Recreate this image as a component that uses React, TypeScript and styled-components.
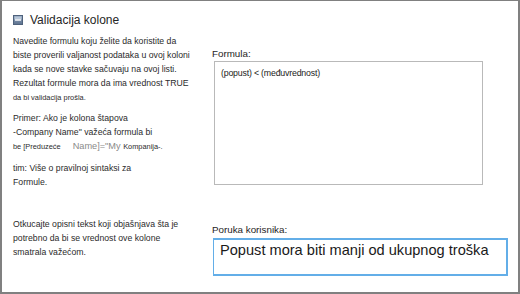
import React from "react";
import styled, { createGlobalStyle } from "styled-components";

const GlobalStyle = createGlobalStyle`
  html, body {
    margin: 0;
    padding: 0;
    background: #ffffff;
  }
  body {
    font-family: "Liberation Sans", Arial, sans-serif;
    color: #1e1e1e;
  }
`;

const Frame = styled.div`
  box-sizing: border-box;
  width: 520px;
  height: 294px;
  border: 2px solid #808080;
  border-top-width: 1px;
  padding: 11px 0 0 11px;
  display: flex;
  flex-direction: column;
`;

const Header = styled.div`
  display: flex;
  align-items: center;
  gap: 7px;
  height: 16px;
`;

const Title = styled.span`
  font-size: 12px;
  color: #262626;
`;

const Section = styled.div<{ $top: number }>`
  display: grid;
  grid-template-columns: 199px 1fr;
  margin-top: ${(p) => p.$top}px;
`;

const Help = styled.div`
  font-size: 8.7px;
  line-height: 14px;
  color: #2b2b2b;
`;

const Para = styled.p<{ $gap?: number }>`
  margin: 0 0 ${(p) => p.$gap ?? 0}px 0;
`;

const Tiny = styled.span`
  font-size: 7.4px;
`;

const Ghost = styled.span`
  color: #8a8a8a;
  font-size: 9.2px;
  padding-left: 12px;
`;

const Field = styled.div<{ $top: number }>`
  display: flex;
  flex-direction: column;
  padding-top: ${(p) => p.$top}px;
`;

const Label = styled.label`
  font-size: 9.8px;
  line-height: 13px;
  color: #1e1e1e;
`;

const FormulaBox = styled.div`
  box-sizing: border-box;
  margin: 1px 0 0 2px;
  width: 269px;
  height: 124px;
  border: 1px solid #b9b9b9;
  padding: 6px 6px;
  font-size: 8.8px;
  letter-spacing: -0.2px;
  color: #222;
`;

const MessageBox = styled.div`
  box-sizing: border-box;
  margin: 2px 0 0 1px;
  width: 295px;
  height: 38px;
  border: 2px solid #63aee8;
  border-left-width: 1px;
  padding: 1px 6px;
  font-size: 14.6px;
  line-height: 18px;
  color: #1a1a1a;
`;

const CollapseIcon = () => (
  <svg width="10" height="10" viewBox="0 0 10 10">
    <defs>
      <linearGradient id="cg" x1="0" y1="0" x2="0" y2="1">
        <stop offset="0" stopColor="#8fa3bd" />
        <stop offset="1" stopColor="#5c718e" />
      </linearGradient>
    </defs>
    <rect x="0.5" y="0.5" width="9" height="9" fill="url(#cg)" stroke="#4f627c" />
    <rect x="1.5" y="1.5" width="7" height="3" fill="#b7c6d8" />
    <rect x="2" y="4.3" width="6" height="1.4" fill="#ffffff" />
  </svg>
);

export default function App() {
  return (
    <>
      <GlobalStyle />
      <Frame>
        <Header>
          <CollapseIcon />
          <Title>Validacija kolone</Title>
        </Header>
        <Section $top={6}>
          <Help>
            <Para $gap={6}>
              Navedite formulu koju želite da koristite da
              <br />
              biste proverili valjanost podataka u ovoj koloni
              <br />
              kada se nove stavke sačuvaju na ovoj listi.
              <br />
              Rezultat formule mora da ima vrednost TRUE
              <br />
              <Tiny>da bi validacija prošla.</Tiny>
            </Para>
            <Para $gap={7}>
              Primer: Ako je kolona štapova
              <br />
              -Company Name" važeća formula bi
              <br />
              <Tiny>be [Preduzeće</Tiny>
              <Ghost>Name]="My </Ghost>
              <Tiny>Kompanija-.</Tiny>
            </Para>
            <Para>
              tim: Više o pravilnoj sintaksi za
              <br />
              Formule.
            </Para>
          </Help>
          <Field $top={13}>
            <Label>Formula:</Label>
            <FormulaBox>(popust) &lt; (međuvrednost)</FormulaBox>
          </Field>
        </Section>
        <Section $top={28}>
          <Help>
            Otkucajte opisni tekst koji objašnjava šta je
            <br />
            potrebno da bi se vrednost ove kolone
            <br />
            smatrala važećom.
          </Help>
          <Field $top={6}>
            <Label>Poruka korisnika:</Label>
            <MessageBox>Popust mora biti manji od ukupnog troška</MessageBox>
          </Field>
        </Section>
      </Frame>
    </>
  );
}
